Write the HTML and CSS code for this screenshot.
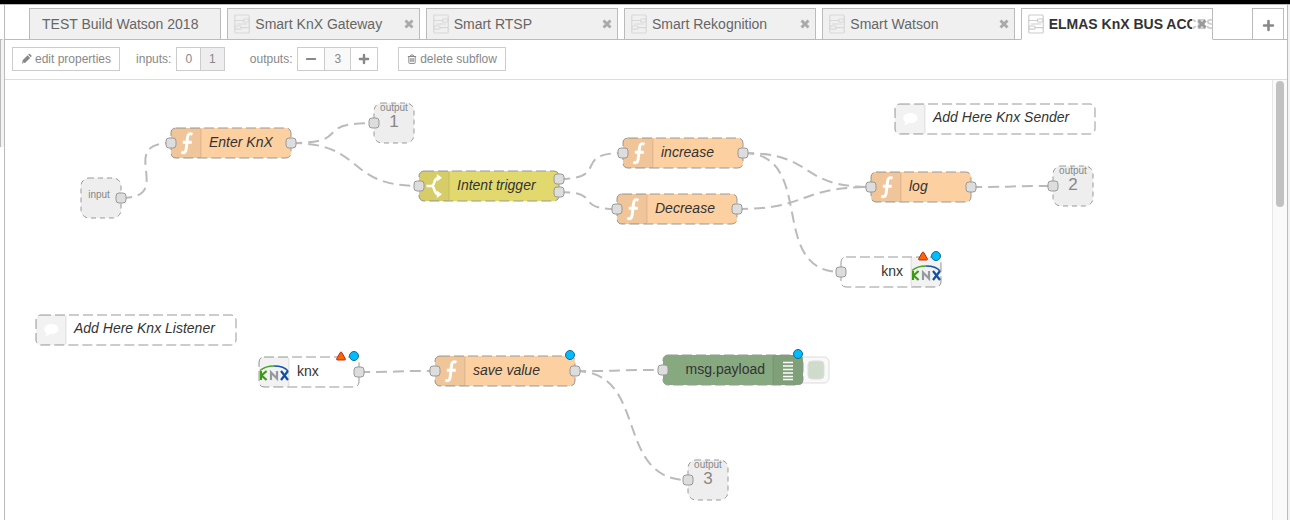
FILE: index.html
```html
<!DOCTYPE html>
<html lang="en">
<head>
<meta charset="utf-8">
<title>Subflow editor</title>
<link rel="stylesheet" href="styles.css">
</head>
<body>
<svg class="defs" aria-hidden="true">
  <symbol id="i-subflow" viewBox="0 0 16 20"><g fill="none" stroke="currentColor" stroke-width="1.200"><rect x=".8" y="1" width="14.400" height="18" rx="1"/><rect x="9.500" y="5" width="5.700" height="3" rx="1"/><rect x=".8" y="12" width="6.200" height="3.200" rx="1"/><path d="M1 6.500h8.500M7 13.700h8M3 10h10"/></g></symbol>
  <symbol id="i-close" viewBox="0 0 10 10"><path d="M1.500 1.500l7 7M8.500 1.500l-7 7" stroke="currentColor" stroke-width="2.900"/></symbol>
  <symbol id="i-plus" viewBox="0 0 12 12"><path d="M6 1.900v8.200M1.900 6h8.200" stroke="currentColor" stroke-width="2.400" stroke-linecap="round"/></symbol>
  <symbol id="i-minus" viewBox="0 0 12 12"><path d="M1.900 6h8.200" stroke="currentColor" stroke-width="2.200" stroke-linecap="round"/></symbol>
  <symbol id="i-pencil" viewBox="0 0 12 12"><path d="M1 11l.8-3.600L7.200 2l2.800 2.800-5.400 5.400zM7.900 1.300l.7-.7q.6-.5 1.200 0l1.600 1.600q.5.600 0 1.200l-.7.700z" fill="currentColor"/><path d="M1.800 8.900l1.300 1.300" stroke="#fff" stroke-width=".7"/></symbol>
  <symbol id="i-trash" viewBox="0 0 12 12"><path d="M1 3h10M4 2.800l.6-1.600h2.800L8 2.800M2.200 3.500v7q0 .8.800.8h6q.8 0 .8-.8v-7M4.500 5v4.500M6 5v4.500M7.500 5v4.500" fill="none" stroke="currentColor" stroke-width="1.200"/></symbol>
  <symbol id="i-function" viewBox="0 0 30 30"><path d="M21.500 6.300C18.600 4.800 17 5.800 16.500 9.500l-1.300 11.300c-.4 3.500-1.900 4.700-4.900 3.300M11.800 14.200h9" fill="none" stroke="#fff" stroke-width="3"/></symbol>
  <symbol id="i-switch" viewBox="0 0 30 30"><path d="M7.500 15h5c4 0 1.500-8.200 7-8.200M12.500 15c4 0 1.500 8.200 7 8.200" fill="none" stroke="#fff" stroke-width="2.500"/><path d="M17.800 3l5.200 3.800-5.200 3.800zM17.800 19.400l5.200 3.800-5.200 3.800z" fill="#fff"/></symbol>
  <symbol id="i-comment" viewBox="0 0 30 30"><path d="M15.500 9c4 0 7 2.200 7 5s-3 5.200-7 5.200l-2-.2c-1.200 1.400-2.800 2-4.500 2.200.9-.9 1.400-1.800 1.500-3C9 17.200 8.300 15.700 8.300 14c0-2.800 3.200-5 7.200-5z" fill="#fff"/></symbol>
  <symbol id="i-debug" viewBox="0 0 30 30"><path d="M10 7.500h10M10 11h10M10 14.500h10M10 18h10M10 21.500h10M10 24.500h10" stroke="#fff" stroke-width="1.600"/></symbol>
  <symbol id="i-knx" viewBox="0 0 30 30"><g fill="none" stroke-width="2.200"><path d="M2 14v9M7.600 14l-5 4.500 5 4.500" stroke="#3a9b12"/><path d="M12 23v-7.500l6 6V14" stroke="#939ba1"/><path d="M22 14l7 9M29 14l-7 9" stroke="#114fa5"/></g><path d="M1 13.500C5 10 10 9 15 9" fill="none" stroke="#46a51c" stroke-width="1.500"/><path d="M15 9c5 0 11 1 14 5" fill="none" stroke="#1855a8" stroke-width="1.500"/></symbol>
  <symbol id="i-error" viewBox="0 0 10 10"><path d="M4.200 1.500q.8-1.200 1.600 0L9.300 7.800q.4 1.200-.8 1.200h-7Q.3 9 .7 7.800z" fill="#f60" stroke="#b22a1c"/></symbol>
</svg>

<header class="topbar"></header>
<div class="main">
  <aside class="palette"><div class="palette-thumb"></div></aside>
  <main class="workspace">
    <nav class="tabbar">
      <ul class="tabs">
        <li class="tab"><a href="#build"><span class="tab-label">TEST Build Watson 2018</span></a></li>
        <li class="tab with-icon"><a href="#gateway"><svg class="tab-icon"><use href="#i-subflow"/></svg><span class="tab-label">Smart KnX Gateway</span></a><button class="close" aria-label="Close Smart KnX Gateway"><svg><use href="#i-close"/></svg></button></li>
        <li class="tab with-icon"><a href="#rtsp"><svg class="tab-icon"><use href="#i-subflow"/></svg><span class="tab-label">Smart RTSP</span></a><button class="close" aria-label="Close Smart RTSP"><svg><use href="#i-close"/></svg></button></li>
        <li class="tab with-icon"><a href="#rekognition"><svg class="tab-icon"><use href="#i-subflow"/></svg><span class="tab-label">Smart Rekognition</span></a><button class="close" aria-label="Close Smart Rekognition"><svg><use href="#i-close"/></svg></button></li>
        <li class="tab with-icon"><a href="#watson"><svg class="tab-icon"><use href="#i-subflow"/></svg><span class="tab-label">Smart Watson</span></a><button class="close" aria-label="Close Smart Watson"><svg><use href="#i-close"/></svg></button></li>
        <li class="tab with-icon active"><a href="#elmas"><svg class="tab-icon"><use href="#i-subflow"/></svg><span class="tab-label">ELMAS KnX BUS ACCESS</span></a><button class="close" aria-label="Close ELMAS KnX BUS ACCESS"><svg><use href="#i-close"/></svg></button></li>
      </ul>
      <button class="add-tab" aria-label="Add tab"><svg><use href="#i-plus"/></svg></button>
    </nav>

    <div class="toolbar">
      <button class="btn"><svg><use href="#i-pencil"/></svg>edit properties</button>
      <div class="field inputs"><span>inputs:</span><div class="group"><button class="btn">0</button><button class="btn selected">1</button></div></div>
      <div class="field outputs"><span>outputs:</span><div class="group"><button class="btn step" aria-label="Fewer outputs"><svg><use href="#i-minus"/></svg></button><output class="btn count">3</output><button class="btn step" aria-label="More outputs"><svg><use href="#i-plus"/></svg></button></div></div>
      <button class="btn delete"><svg><use href="#i-trash"/></svg>delete subflow</button>
    </div>

    <div class="canvas">
      <svg class="chart" role="img" aria-label="Flow">
        <g class="wires">
          <path d="M116 118C172 118 110 63 166 63"/>
          <path d="M286 63C350 63 305 43 369 43"/>
          <path d="M286 63C361 63 339 106 414 106"/>
          <path d="M554 99C606 99 566 73 618 73"/>
          <path d="M554 112C599 112 567 129 612 129"/>
          <path d="M738 73C813 73 791 107 866 107"/>
          <path d="M738 73C813 73 761 192 836 192"/>
          <path d="M732 129C807 129 791 107 866 107"/>
          <path d="M966 107C1027 107 987 106 1048 106"/>
          <path d="M354 292C411 292 373 291 430 291"/>
          <path d="M570 291C636 291 592 290 658 290"/>
          <path d="M570 291C645 291 608 400 683 400"/>
        </g>

        <g transform="translate(76 98)"><rect class="io" width="40" height="40" rx="8"/><text class="io-label" x="18" y="20">input</text><rect class="port" x="35" y="15" width="10" height="10" rx="3"/></g>
        <g transform="translate(369 23)"><rect class="io" width="40" height="40" rx="8"/><text class="io-label" x="20" y="8">output</text><text class="io-number" x="20" y="24">1</text><rect class="port" x="-5" y="15" width="10" height="10" rx="3"/></g>
        <g transform="translate(1048 86)"><rect class="io" width="40" height="40" rx="8"/><text class="io-label" x="20" y="8">output</text><text class="io-number" x="20" y="24">2</text><rect class="port" x="-5" y="15" width="10" height="10" rx="3"/></g>
        <g transform="translate(683 380)"><rect class="io" width="40" height="40" rx="8"/><text class="io-label" x="20" y="8">output</text><text class="io-number" x="20" y="24">3</text><rect class="port" x="-5" y="15" width="10" height="10" rx="3"/></g>

        <g transform="translate(166 48)"><rect class="node function" width="120" height="30" rx="5"/><path class="shade" d="M5 0H30V30H5Q0 30 0 25V5Q0 0 5 0"/><path class="edge" d="M30 1V29"/><use href="#i-function" width="30" height="30"/><text class="label" x="38" y="19">Enter KnX</text><rect class="port" x="-5" y="10" width="10" height="10" rx="3"/><rect class="port" x="115" y="10" width="10" height="10" rx="3"/></g>
        <g transform="translate(414 91)"><rect class="node switch" width="140" height="30" rx="5"/><path class="shade" d="M5 0H30V30H5Q0 30 0 25V5Q0 0 5 0"/><path class="edge" d="M30 1V29"/><use href="#i-switch" width="30" height="30"/><text class="label" x="38" y="19">Intent trigger</text><rect class="port" x="-5" y="10" width="10" height="10" rx="3"/><rect class="port" x="135" y="3" width="10" height="10" rx="3"/><rect class="port" x="135" y="16" width="10" height="10" rx="3"/></g>
        <g transform="translate(618 58)"><rect class="node function" width="120" height="30" rx="5"/><path class="shade" d="M5 0H30V30H5Q0 30 0 25V5Q0 0 5 0"/><path class="edge" d="M30 1V29"/><use href="#i-function" width="30" height="30"/><text class="label" x="38" y="19">increase</text><rect class="port" x="-5" y="10" width="10" height="10" rx="3"/><rect class="port" x="115" y="10" width="10" height="10" rx="3"/></g>
        <g transform="translate(612 114)"><rect class="node function" width="120" height="30" rx="5"/><path class="shade" d="M5 0H30V30H5Q0 30 0 25V5Q0 0 5 0"/><path class="edge" d="M30 1V29"/><use href="#i-function" width="30" height="30"/><text class="label" x="38" y="19">Decrease</text><rect class="port" x="-5" y="10" width="10" height="10" rx="3"/><rect class="port" x="115" y="10" width="10" height="10" rx="3"/></g>
        <g transform="translate(866 92)"><rect class="node function" width="100" height="30" rx="5"/><path class="shade" d="M5 0H30V30H5Q0 30 0 25V5Q0 0 5 0"/><path class="edge" d="M30 1V29"/><use href="#i-function" width="30" height="30"/><text class="label" x="38" y="19">log</text><rect class="port" x="-5" y="10" width="10" height="10" rx="3"/><rect class="port" x="95" y="10" width="10" height="10" rx="3"/></g>
        <g transform="translate(890 24)"><rect class="node plain" width="200" height="30" rx="5"/><path class="shade" d="M5 0H30V30H5Q0 30 0 25V5Q0 0 5 0"/><path class="edge" d="M30 1V29"/><use href="#i-comment" width="30" height="30"/><text class="label" x="38" y="18">Add Here Knx Sender</text></g>
        <g transform="translate(31 235)"><rect class="node plain" width="200" height="30" rx="5"/><path class="shade" d="M5 0H30V30H5Q0 30 0 25V5Q0 0 5 0"/><path class="edge" d="M30 1V29"/><use href="#i-comment" width="30" height="30"/><text class="label" x="38" y="18">Add Here Knx Listener</text></g>
        <g transform="translate(836 177)"><rect class="node plain" width="100" height="30" rx="5"/><path class="shade" d="M70 0H95Q100 0 100 5V25Q100 30 95 30H70Z"/><path class="edge" d="M70 1V29"/><use href="#i-knx" x="70" width="30" height="30"/><text class="label upright end" x="62" y="19">knx</text><use href="#i-error" x="77" y="-6" width="10" height="10"/><circle class="changed" cx="95" cy="-1" r="4.500"/><rect class="port" x="-5" y="10" width="10" height="10" rx="3"/></g>
        <g transform="translate(254 277)"><rect class="node plain" width="100" height="30" rx="5"/><path class="shade" d="M5 0H30V30H5Q0 30 0 25V5Q0 0 5 0"/><path class="edge" d="M30 1V29"/><use href="#i-knx" width="30" height="30"/><text class="label upright" x="38" y="19">knx</text><use href="#i-error" x="77" y="-6" width="10" height="10"/><circle class="changed" cx="95" cy="-1" r="4.500"/><rect class="port" x="95" y="10" width="10" height="10" rx="3"/></g>
        <g transform="translate(430 276)"><rect class="node function" width="140" height="30" rx="5"/><path class="shade" d="M5 0H30V30H5Q0 30 0 25V5Q0 0 5 0"/><path class="edge" d="M30 1V29"/><use href="#i-function" width="30" height="30"/><text class="label" x="38" y="19">save value</text><circle class="changed" cx="135" cy="-1" r="4.500"/><rect class="port" x="-5" y="10" width="10" height="10" rx="3"/><rect class="port" x="135" y="10" width="10" height="10" rx="3"/></g>
        <g transform="translate(658 275)"><rect class="toggle" x="134" y="2" width="32" height="26" rx="5"/><rect class="toggle-face" x="145" y="6" width="16" height="18" rx="4"/><rect class="node debug" width="140" height="30" rx="5"/><path class="shade" d="M110 0H135Q140 0 140 5V25Q140 30 135 30H110Z"/><path class="edge" d="M110 1V29"/><use href="#i-debug" x="110" width="30" height="30"/><text class="label upright end" x="102" y="19">msg.payload</text><circle class="changed" cx="135" cy="-1" r="4.500"/><rect class="port" x="-5" y="10" width="10" height="10" rx="3"/></g>
      </svg>
      <div class="scrollbar"><div class="thumb"></div></div>
    </div>
  </main>
</div>
</body>
</html>
```

FILE: styles.css
```css
* { box-sizing: border-box; }
body {
  margin: 0;
  height: 100vh;
  display: flex;
  flex-direction: column;
  overflow: hidden;
  background: #f3f3f3;
  font: 14px/20px "Liberation Sans", Arial, sans-serif;
  color: #666;
}
button { font: inherit; color: inherit; cursor: pointer; }
.defs { position: absolute; width: 0; height: 0; }
.topbar { height: 4px; background: #000; flex: none; }
.main { flex: 1; display: flex; min-height: 0; border-top: 1px solid #bbb; }

.palette { width: 4px; background: #fff; padding-top: 34px; }
.palette-thumb { height: 108px; border-top: 1px solid #bbb; border-right: 3px solid #f3f3f3; background: #bbb; }

.workspace {
  flex: 1;
  min-width: 0;
  margin-right: 2px;
  display: flex;
  flex-direction: column;
  border: 1px solid #bbb;
  border-width: 0 1px;
  background: #fff;
}

.tabbar { display: flex; height: 35px; padding: 3px 3px 0 24px; box-shadow: inset 0 -1px #bbb; }
.tabs { flex: 1; display: flex; gap: 6px; margin: 0; padding: 0 39px 0 0; list-style: none; min-width: 0; }
.tab {
  position: relative;
  flex: 1 1 0;
  min-width: 0;
  overflow: hidden;
  border: 1px solid #bbb;
  background: #f0f0f0;
}
.tab a { display: flex; align-items: center; height: 30px; padding-left: 12px; color: #666; text-decoration: none; white-space: nowrap; }
.with-icon a { padding-left: 6px; gap: 5px; }
.tab-icon { width: 16px; height: 20px; flex: none; color: #d8d8d8; }
.active .tab-icon { color: #ccc; }
.tab.active { background: #fff; border-bottom-color: #fff; font-weight: bold; }
.tab.active a { color: #333; }
.close { position: absolute; top: 0; right: 0; height: 30px; width: 20px; padding: 0 5px; border: 0; background: rgba(240, 240, 240, .8); color: #aaa; }
.active .close { background: rgba(255, 255, 255, .75); color: #999; }
.close svg { display: block; width: 10px; height: 10px; }
.add-tab { width: 32px; padding: 3px 0 0; border: 1px solid #bbb; background: #fff; color: #888; display: flex; align-items: center; justify-content: center; }
.add-tab svg { width: 13px; height: 13px; }

.toolbar { display: flex; align-items: center; height: 40px; padding: 0 7px 1px; border-bottom: 1px solid #ddd; font-size: 12px; color: #888; }
.btn { height: 24px; padding: 0 8px; display: flex; align-items: center; gap: 3px; border: 1px solid #ccc; background: #fff; line-height: 22px; }
.btn svg { width: 11px; height: 12px; }
.field { display: flex; align-items: center; gap: 5px; }
.inputs { margin: 0 25px 0 16px; }
.outputs { margin-right: 20px; }
.group { display: flex; }
.group .btn + .btn { margin-left: -1px; }
.selected { background: #eee; }
.step { padding: 0 7px; }
.step svg { width: 12px; }
.count { padding: 0 9px; background: #f9f9f9; }
.delete svg { width: 10px; }

.canvas { flex: 1; min-height: 0; display: flex; }
.chart { flex: 1; min-width: 0; height: 100%; display: block; }
.scrollbar { width: 15px; padding: 1px 3px; background: #fafafa; border-left: 1px solid #e7e7e7; }
.thumb { height: 126px; width: 8px; border-radius: 4px; background: #c1c1c1; }

.wires path { fill: none; stroke: #bbb; stroke-width: 2; stroke-dasharray: 11 6; }
.node { stroke: #999; stroke-dasharray: 10 4; }
.function { fill: #fdd0a2; }
.switch { fill: #e2d96e; }
.plain { fill: #fff; }
.debug { fill: #87a980; }
.shade { fill: #000; fill-opacity: .05; }
.edge { stroke: #000; stroke-opacity: .1; }
.port { fill: #ddd; stroke: #999; }
.io { fill: #eee; stroke: #999; stroke-dasharray: 5 4; }
.io-label { font-size: 10px; fill: #888; text-anchor: middle; }
.io-number { font-size: 17px; fill: #888; text-anchor: middle; }
.label { font-size: 14px; font-style: italic; fill: #333; }
.upright { font-style: normal; }
.end { text-anchor: end; }
.changed { fill: #00bcff; stroke: #0d6c95; }
.toggle { fill: #f9f9f9; stroke: #ddd; }
.toggle-face { fill: #cfdccc; stroke: #ddd; }
```
